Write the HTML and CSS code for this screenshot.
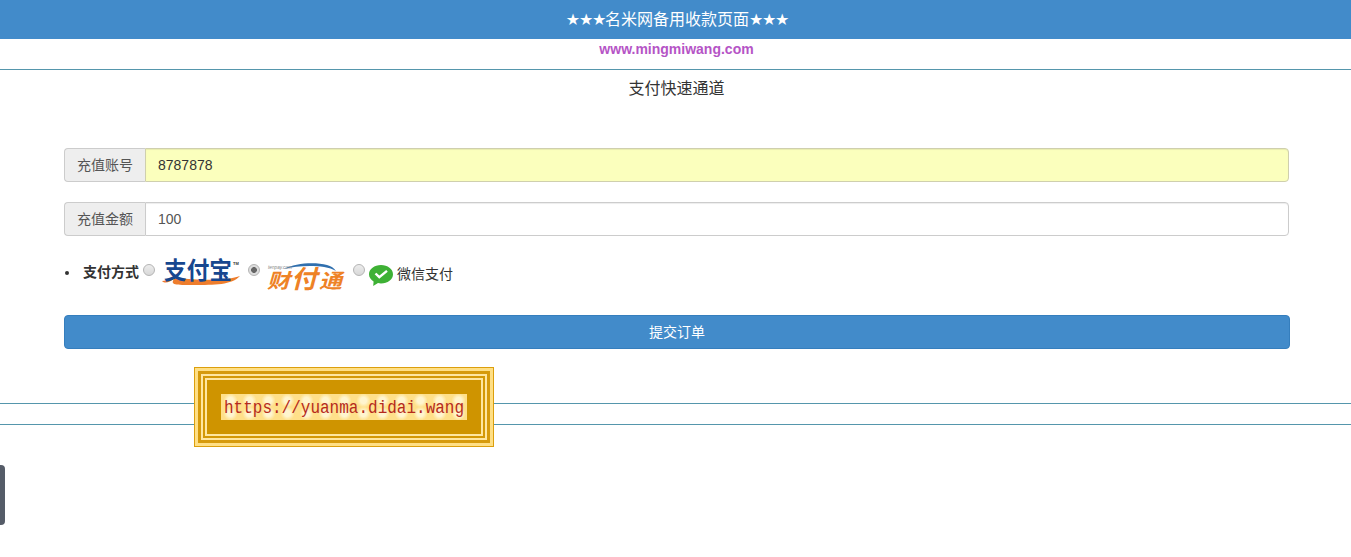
FILE: index.html
```html
<!DOCTYPE html>
<html lang="zh-CN">
<head>
<meta charset="utf-8">
<title>名米网备用收款页面</title>
<link rel="stylesheet" href="styles.css">
</head>
<body>
<header class="banner"><span class="stars">★★★</span>名米网备用收款页面<span class="stars">★★★</span></header>
<div class="site">www.mingmiwang.com</div>
<hr class="rule rule-top">
<h1 class="title">支付快速通道</h1>
<form class="form">
  <div class="group">
    <span class="addon">充值账号</span>
    <div class="field field-filled">8787878</div>
  </div>
  <div class="group">
    <span class="addon">充值金额</span>
    <div class="field field-plain">100</div>
  </div>
  <ul class="methods">
    <li class="method-item">
      <span class="bullet"></span>
      <b class="method-label">支付方式</b>
      <span class="radio radio-first"></span>
      <svg class="logo-ali" width="78" height="25" viewBox="0 0 78 25">
        <path d="M0 21C3 24 8 22 12 19C8 25 13 25 32 25C52 25 70 25 78 16C68 20 44 21 14 18L8 18C6 20 3 21 0 21Z" fill="#ee7d2c"/>
        <text class="ali-text" x="2" y="19" textLength="68" lengthAdjust="spacingAndGlyphs">支付宝</text>
        <text class="ali-tm" x="71" y="5">TM</text>
      </svg>
      <span class="radio radio-on"></span>
      <svg class="logo-ten" width="75" height="26" viewBox="0 0 75 26">
        <path d="M17 6C28 0 48 -1 60 2C64 3 67 5 69 8C63 4 52 3 43 3C33 3 24 4 17 6Z" fill="#2f6fae"/>
        <text class="ten-small" x="1" y="6" textLength="24" lengthAdjust="spacingAndGlyphs">tenpay.com</text>
        <text class="ten-text" x="0" y="25" textLength="23" lengthAdjust="spacingAndGlyphs">财</text>
        <text class="ten-big" x="24" y="25" textLength="26" lengthAdjust="spacingAndGlyphs">付</text>
        <text class="ten-text" x="52" y="25" textLength="23" lengthAdjust="spacingAndGlyphs">通</text>
      </svg>
      <span class="radio radio-last"></span>
      <svg class="logo-we" width="24" height="21" viewBox="0 0 24 21">
        <path d="M12 0C5.400 0 0 4 0 9.200C0 12.200 1.800 14.800 4.600 16.400L4.200 21L9 18.100C10 18.300 11 18.400 12 18.400C18.600 18.400 24 14.400 24 9.200C24 4 18.600 0 12 0Z" fill="#3eb135"/>
        <path d="M6.500 8.500L10.300 12.200L18 5.800" fill="none" stroke="#fff" stroke-width="2.400"/>
      </svg>
      <span class="we-text">微信支付</span>
    </li>
  </ul>
  <div class="submit">提交订单</div>
</form>
<hr class="rule rule-a">
<hr class="rule rule-b">
<aside class="ad">
  <div class="ad-plate"><span class="ad-text">https://yuanma.didai.wang</span></div>
</aside>
<div class="handle"></div>
</body>
</html>
```

FILE: styles.css
```css
* { box-sizing: border-box; }
html, body { margin: 0; padding: 0; }
body {
  height: 557px;
  overflow: hidden;
  background: #fff;
  color: #333;
  font-family: "Liberation Sans", "Noto Sans CJK SC", sans-serif;
  font-size: 14px;
}
.banner {
  height: 39px;
  padding-left: 3px;
  line-height: 39px;
  background: #428bca;
  color: #fff;
  text-align: center;
  font-family: "Liberation Sans", "DejaVu Sans", "Noto Sans CJK SC", sans-serif;
  font-size: 16px;
}
.stars { letter-spacing: -1.3px; }
.site {
  height: 30px;
  padding: 1px 0 0 2px;
  line-height: 18px;
  text-align: center;
  font-weight: bold;
  color: #b554c6;
}
.rule { display: block; margin: 0; border: 0; height: 1px; background: #5596ac; }
.title {
  margin: 0;
  height: 78px;
  padding: 9px 0 0 2px;
  line-height: 20px;
  text-align: center;
  font-size: 16px;
  font-weight: normal;
}
.form { margin: 0 61px 0 64px; }
.group { display: flex; height: 34px; margin-bottom: 20px; width: 1225px; }
.addon {
  width: 81px;
  padding-bottom: 2px;
  display: flex;
  align-items: center;
  justify-content: center;
  background: #eee;
  border: 1px solid #ccc;
  border-right: 0;
  border-radius: 4px 0 0 4px;
  color: #555;
}
.field {
  flex: 1;
  padding-left: 12px;
  line-height: 32px;
  border: 1px solid #ccc;
  border-radius: 0 4px 4px 0;
  color: #555;
  box-shadow: inset 0 1px 1px rgba(0,0,0,.075);
}
.field-filled { background: #fbffbd; border-color: #cfcfae; color: #333; }
.field-plain { background: #fff; }
.methods { margin: 0; padding: 0; height: 59px; list-style: none; }
.method-item { display: flex; align-items: flex-start; height: 59px; line-height: 20px; }
.bullet {
  width: 4px;
  height: 4px;
  margin: 15px 0 0 1px;
  border-radius: 50%;
  background: #333;
}
.method-label { margin: 6px 0 0 14px; color: #333; }
.radio {
  width: 12px;
  height: 12px;
  margin: 8px 0 0 8px;
  border-radius: 50%;
  border: 1px solid #b4b4b4;
  background: linear-gradient(#ececec, #d8d8d8);
}
.radio-first { margin-left: 4px; }
.radio-on { background: radial-gradient(circle, #666 0 2.600px, #ddd 3.200px); }
.radio-last { margin-left: 11px; }
.logo-ali { margin: 4px 0 0 7px; overflow: visible; }
.logo-ten { margin: 7px 0 0 7px; overflow: visible; }
.logo-we { margin: 9px 0 0 4px; }
.ali-text {
  font: 700 24px "Noto Sans CJK SC", sans-serif;
  fill: #17478f;
}
.ali-tm { font: bold 4px "Liberation Sans", sans-serif; fill: #333; }
.ten-small { font: italic 5px "Liberation Sans", sans-serif; fill: #888; }
.ten-text { font: italic 700 20px "Noto Sans CJK SC", sans-serif; fill: #ee8226; }
.ten-big { font: italic 700 25px "Noto Sans CJK SC", sans-serif; fill: #ee8226; }
.we-text { margin: 8px 0 0 4px; color: #333; }
.submit {
  width: 1226px;
  height: 34px;
  line-height: 32px;
  text-align: center;
  background: #428bca;
  border: 1px solid #357ebd;
  border-radius: 4px;
  color: #fff;
}
.rule-a { margin-top: 54px; }
.rule-b { margin-top: 20px; }
.ad {
  position: absolute;
  left: 194px;
  top: 367px;
  width: 300px;
  height: 80px;
  display: flex;
  align-items: center;
  justify-content: center;
  background: #cf9400;
  box-shadow:
    inset 0 0 0 1px #dc9f0c,
    inset 0 0 0 4px #ffdf85,
    inset 0 0 0 7px #d69a0c,
    inset 0 0 0 9px #ffe6a0,
    inset 0 0 0 11px #d49806,
    inset 0 0 0 13px #ffe6a0;
}
.ad-plate {
  width: 246px;
  height: 26px;
  padding: 2px 0 0 3px;
  background:
    radial-gradient(circle, #fff5cf 0 3px, transparent 7px) 0 0 / 19px 13px,
    #ffe08a;
}
.ad-text {
  display: block;
  font: 16px/24px "Liberation Mono", monospace;
  color: #b52a1c;
  white-space: nowrap;
  transform: scaleY(1.15);
}
.handle {
  position: absolute;
  left: 0;
  top: 465px;
  width: 5px;
  height: 60px;
  background: #555c68;
  border-radius: 0 4px 4px 0;
}
```
